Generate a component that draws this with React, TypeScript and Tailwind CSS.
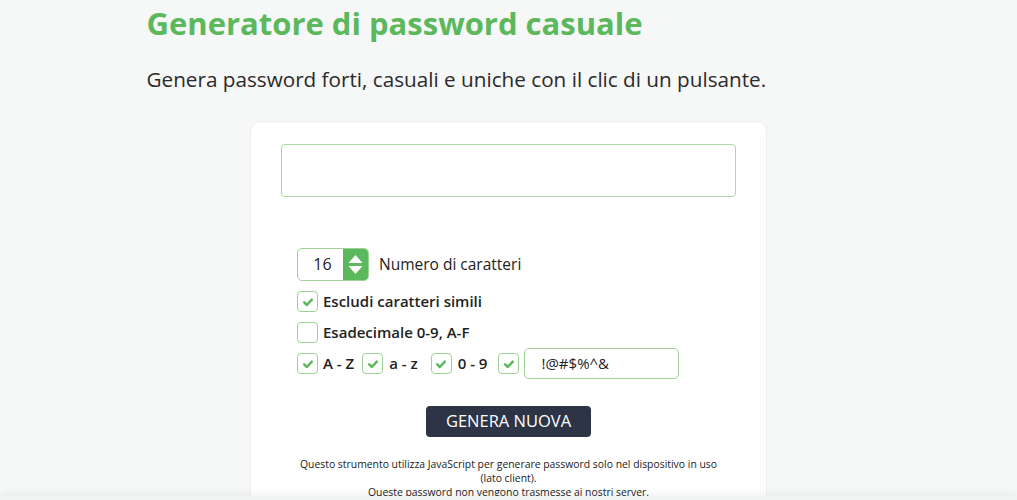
import { useState } from 'react';

const Check = ({ on }: { on: boolean }) => (
    <span className="flex h-[21px] w-[21px] shrink-0 items-center justify-center rounded-[4px] border border-[#9fd196] bg-white">
        {on && (
            <svg viewBox="0 0 12 12" className="h-[12px] w-[12px]">
                <path d="M2.2 6.4 L4.9 9 L9.8 3.6" fill="none" stroke="#5cb85c" strokeWidth="2.5" strokeLinecap="round" strokeLinejoin="round" />
            </svg>
        )}
    </span>
);

const App = () => {
    const [length] = useState(16);

    return (
        <div className="min-h-screen bg-[#f6f7f7] text-[#222]" style={{ fontFamily: '"Open Sans", sans-serif' }}>
            <div className="mx-auto w-[724px] pt-[2px]">
                <h1 className="text-[31px] leading-[42px] font-bold text-[#5cb85c]">Generatore di password casuale</h1>
                <p className="mt-[20px] text-[20.7px] leading-[30px] text-[#2a2a2a]">
                    Genera password forti, casuali e uniche con il clic di un pulsante.
                </p>
            </div>

            <div className="mx-auto mt-[27px] w-[517px] rounded-[10px] border border-[#eeeeee] bg-white px-[30px] pt-[22px] pb-[20px]">
                <div className="h-[53px] rounded-[4px] border border-[#a9d7a1]"></div>

                <div className="mt-[51px] flex flex-col gap-[10px] pl-[16px] text-[15px] leading-[21px]">
                    <div className="flex items-center gap-[10px]">
                        <div className="flex h-[33px] overflow-hidden rounded-[5px] border border-[#9fd196]">
                            <div className="flex w-[45px] items-center justify-center pl-[4px] text-[16px]">{length}</div>
                            <div className="flex w-[25px] flex-col items-center justify-center gap-[3px] bg-[#5cb85c]">
                                <svg viewBox="0 0 14 8" className="h-[8px] w-[15px]"><path d="M7 0 L14 8 L0 8 Z" fill="white" /></svg>
                                <svg viewBox="0 0 14 8" className="h-[8px] w-[15px]"><path d="M0 0 L14 0 L7 8 Z" fill="white" /></svg>
                            </div>
                        </div>
                        <span className="text-[15.5px]">Numero di caratteri</span>
                    </div>

                    <label className="flex items-center gap-[5px]">
                        <Check on={true} />
                        <span className="font-semibold">Escludi caratteri simili</span>
                    </label>

                    <label className="flex items-center gap-[5px]">
                        <Check on={false} />
                        <span className="font-semibold">Esadecimale 0-9, A-F</span>
                    </label>

                    <div className="flex h-[21px] items-center">
                        <Check on={true} />
                        <span className="ml-[5px] font-semibold">A - Z</span>
                        <span className="ml-[8px]"><Check on={true} /></span>
                        <span className="ml-[6px] font-semibold">a - z</span>
                        <span className="ml-[13px]"><Check on={true} /></span>
                        <span className="ml-[6px] font-semibold">0 - 9</span>
                        <span className="ml-[11px]"><Check on={true} /></span>
                        <div className="ml-[5px] flex h-[31px] w-[155px] shrink-0 items-center rounded-[5px] border border-[#9fd196] pl-[16px]">
                            !@#$%^&amp;
                        </div>
                    </div>
                </div>

                <div className="mt-[32px] flex justify-center">
                    <button className="h-[31px] w-[165px] rounded-[4px] bg-[#2c3446] text-[16.5px] text-white">GENERA NUOVA</button>
                </div>

                <p className="mt-[20px] text-center text-[10.4px] leading-[14px] text-[#222]">
                    Questo strumento utilizza JavaScript per generare password solo nel dispositivo in uso
                    <br />
                    (lato client).
                    <br />
                    Queste password non vengono trasmesse ai nostri server.
                </p>
            </div>

            <div className="fixed bottom-0 left-0 right-0 h-[4px] bg-[#f3f4f4] shadow-[0_-2px_6px_rgba(0,0,0,0.08)]"></div>
        </div>
    );
};

export default App;
